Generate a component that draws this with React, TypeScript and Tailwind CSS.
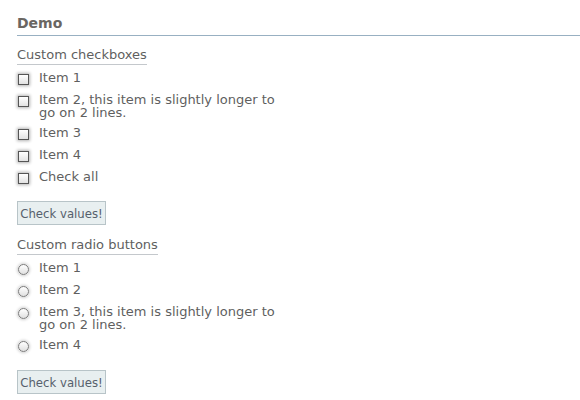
import React from "react";

const font = { fontFamily: '"DejaVu Sans", Verdana, sans-serif' };

function Box() {
  return (
    <span className="mt-[3px] ml-[1px] block h-[11px] w-[11px] shrink-0 border border-[#555] bg-gradient-to-b from-white to-[#e2e2e2] shadow-[0_0_3px_1px_rgba(0,0,0,0.3)]" />
  );
}

function Radio() {
  return (
    <span className="mt-[3px] ml-[1px] block h-[11px] w-[11px] shrink-0 rounded-full border border-[#7a7a7a] bg-gradient-to-b from-white to-[#e0e0e0] shadow-[0_0_3px_1px_rgba(0,0,0,0.2)]" />
  );
}

function Row({ radio, children }: { radio?: boolean; children: React.ReactNode }) {
  return (
    <label className="flex min-h-[15px] items-start gap-[10px]">
      {radio ? <Radio /> : <Box />}
      <span className="block w-[250px] text-[13px] leading-[13px] text-[#5f5f5f]">{children}</span>
    </label>
  );
}

function Button() {
  return (
    <div className="mt-[16px] flex">
      <button
        className="flex h-[24px] w-[89px] items-center justify-center border border-[#b8c4c8] bg-[#e8eff0] text-[13px] leading-[13px] text-[#56606c]"
        style={{ fontFamily: '"DejaVu Sans Condensed", "DejaVu Sans", sans-serif', fontStretch: "condensed" }}
      >
        Check values!
      </button>
    </div>
  );
}

function Title({ children, mt }: { children: React.ReactNode; mt: string }) {
  return (
    <div className={"flex " + mt}>
      <span className="block border-b border-[#c4c8cc] pb-[1px] text-[13px] leading-[16px] text-[#5f5f5f]">
        {children}
      </span>
    </div>
  );
}

export default function App() {
  return (
    <div className="min-h-[400px] w-[580px] bg-white pl-[17px] pt-[15px]" style={font}>
      <h2 className="border-b border-[#98b0c2] pb-[3px] text-[14px] font-bold leading-[17px] text-[#6a6662]">
        Demo
      </h2>
      <Title mt="mt-[11px]">Custom checkboxes</Title>
      <div className="mt-[6px] flex flex-col gap-[7px]">
        <Row>Item 1</Row>
        <Row>Item 2, this item is slightly longer to go on 2 lines.</Row>
        <Row>Item 3</Row>
        <Row>Item 4</Row>
        <Row>Check all</Row>
      </div>
      <Button />
      <Title mt="mt-[12px]">Custom radio buttons</Title>
      <div className="mt-[6px] flex flex-col gap-[7px]">
        <Row radio>Item 1</Row>
        <Row radio>Item 2</Row>
        <Row radio>Item 3, this item is slightly longer to go on 2 lines.</Row>
        <Row radio>Item 4</Row>
      </div>
      <div className="h-[1px]" />
      <Button />
    </div>
  );
}
